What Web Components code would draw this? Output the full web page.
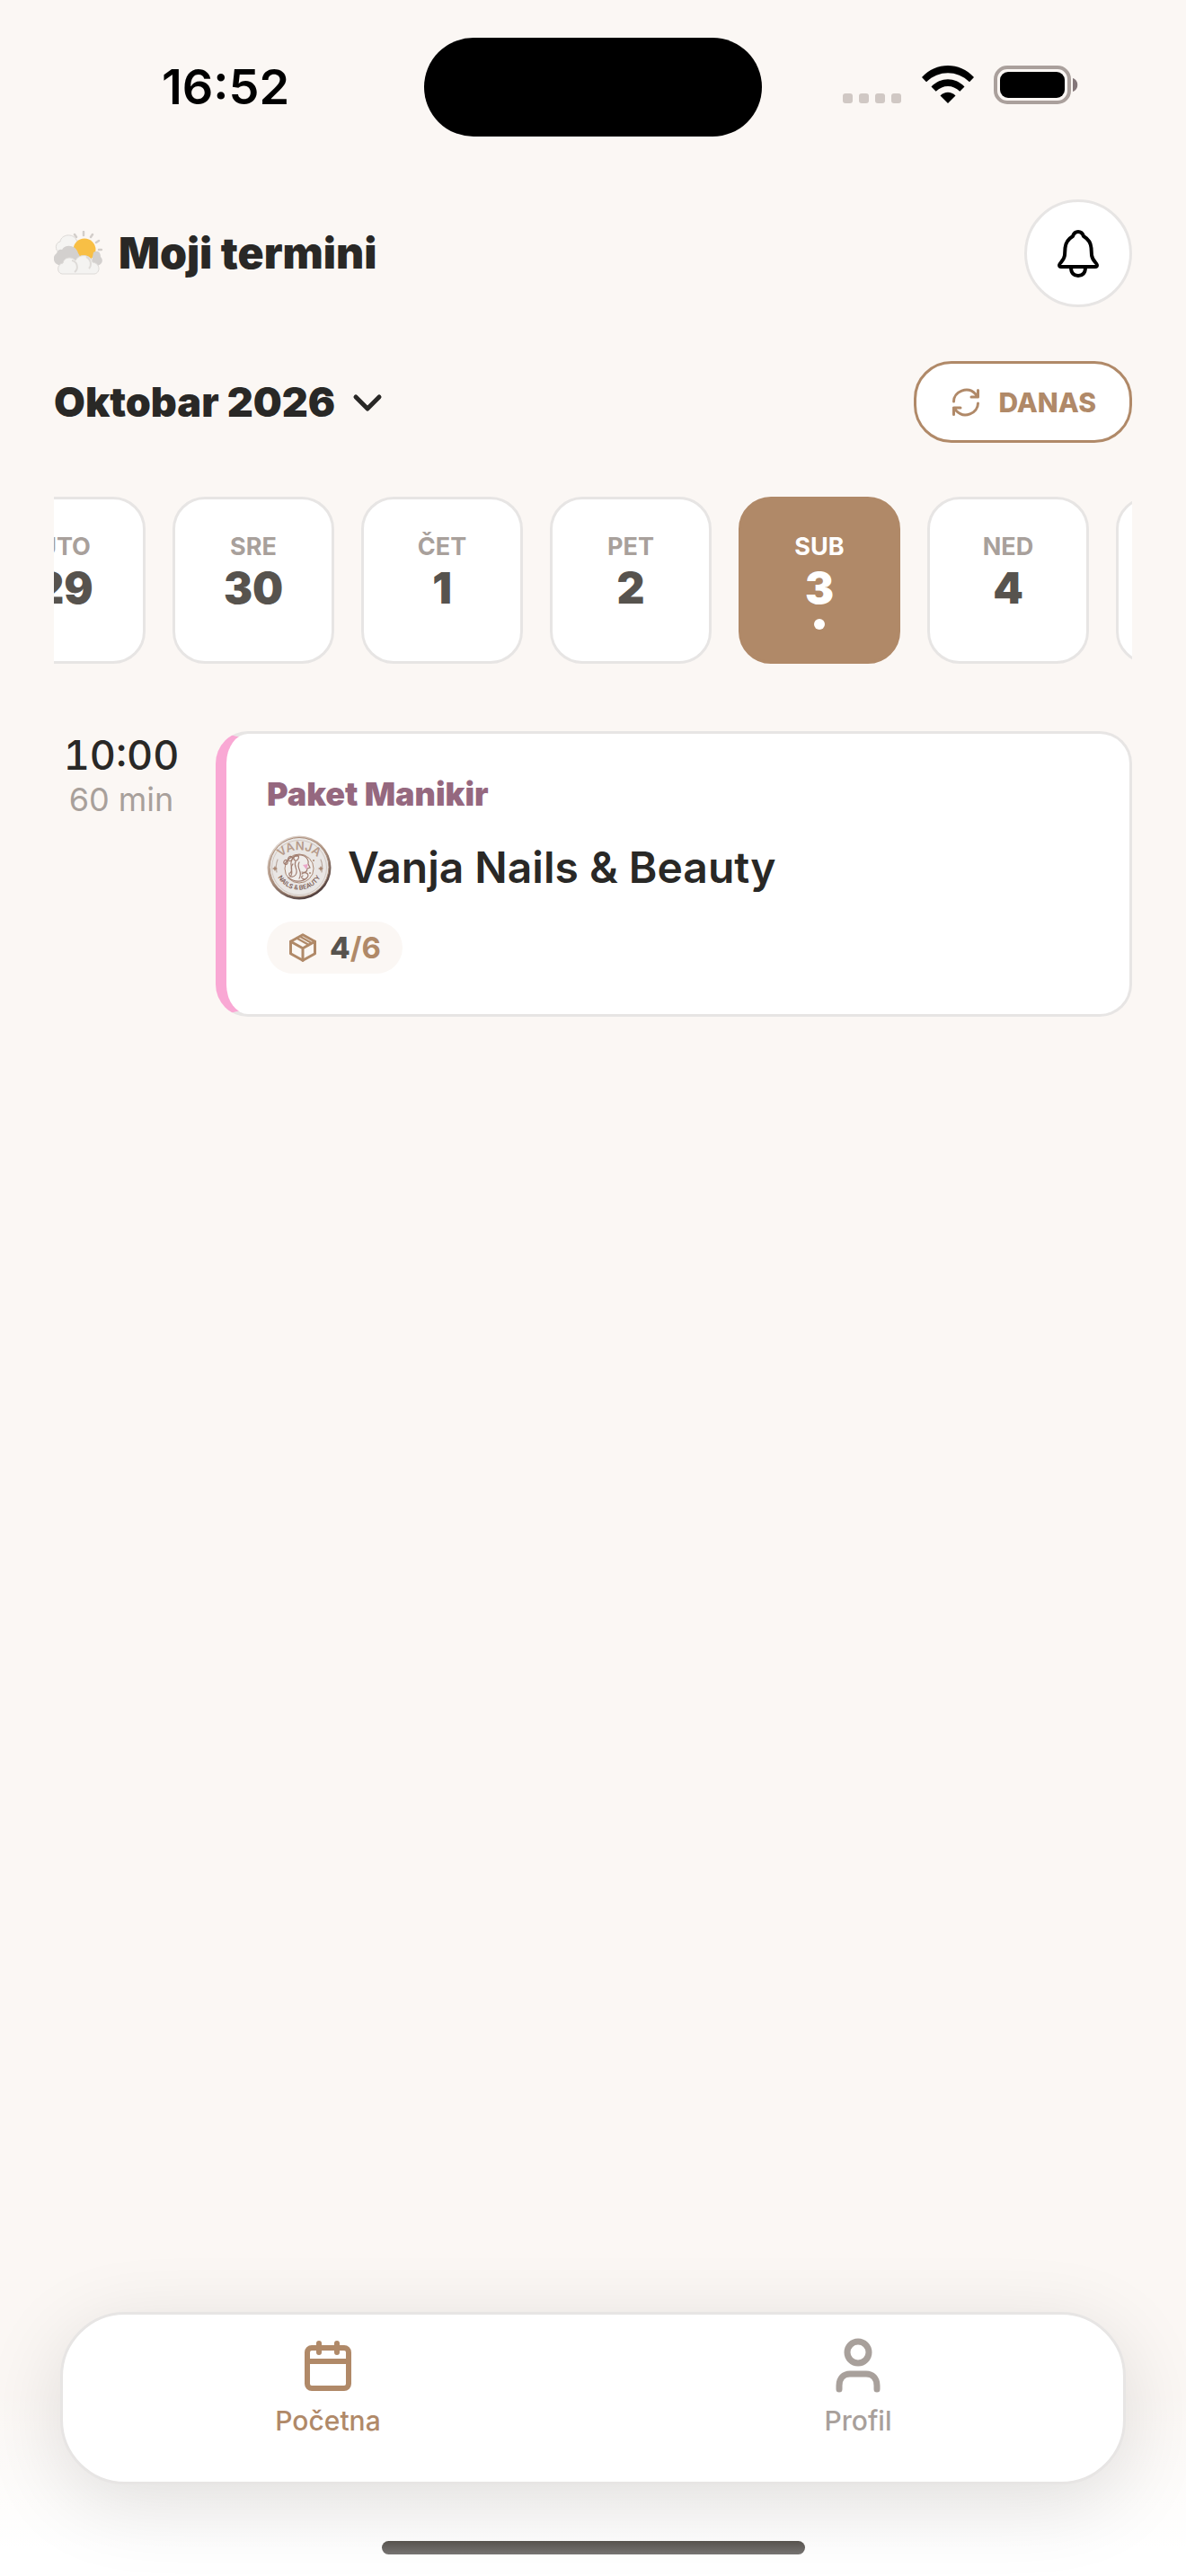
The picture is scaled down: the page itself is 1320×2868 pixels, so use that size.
<!DOCTYPE html>
<html lang="sr-Latn">
<head>
<meta charset="utf-8">
<meta name="viewport" content="width=device-width, initial-scale=1">
<title>Moji termini</title>
<style>
    :root {
        --bg: #fbf7f4;
        --surface: #fff;
        --line: #e7e5e4;
        --ink: #292826;
        --ink-soft: #57534e;
        --muted: #a8a09b;
        --accent: #b08968;
        --plum: #95687f;
        --pink: #f9a8d4;
        --gutter: 60px;
    }

    body {
        margin: 0;
        background: var(--bg);
        color: var(--ink);
        font-family: Inter, "Liberation Sans", sans-serif;
    }
</style>
</head>
<body>
<termini-app></termini-app>

<script>
class StatusBar extends HTMLElement {
    constructor() {
        super();
        this.attachShadow({mode: "open"});
    }

    static get styles() {
        return /* css */`
            :host {
                display: grid;
                grid-template-columns: 1fr 376px 1fr;
                align-items: center;
                justify-items: center;
                padding: 42px 30px 0;
                color: #000;
            }

            time {
                font-size: 54px;
                line-height: 60px;
                font-weight: 600;
            }

            .island {
                width: 100%;
                height: 110px;
                border-radius: 55px;
                background: #000;
            }

            .icons {
                display: flex;
            }

            .signal { margin-right: 23px; }
            .wifi { margin-right: 22px; }
        `;
    }

    connectedCallback() {
        this.shadowRoot.innerHTML = /* html */`
        <style>${StatusBar.styles}</style>
        <time>${this.getAttribute("time")}</time>
        <div class="island"></div>
        <div class="icons">
            <svg class="signal" width="65" height="48" viewBox="0 0 65 48" fill="#d0c8c4">
                <rect x="0" y="31" width="11" height="11" rx="3"/>
                <rect x="18" y="31" width="11" height="11" rx="3"/>
                <rect x="36" y="31" width="11" height="11" rx="3"/>
                <rect x="54" y="31" width="11" height="11" rx="3"/>
            </svg>
            <svg class="wifi" width="58" height="48" viewBox="0 0 58 48">
                <path d="M0 13C16-4.300 42-4.300 58 13l-5 5.300C39 5 19 5 5 18.300z"/>
                <path d="M10.500 23.500c10.500-11 26.500-11 37 0l-5.200 5.300c-8-7.600-18.600-7.600-26.600 0z"/>
                <path d="M20.500 33.500c5-5 12-5 17 0L29 42z"/>
            </svg>
            <svg width="94" height="48" viewBox="0 0 94 48">
                <rect x="2" y="2" width="82" height="39" rx="13" fill="none" stroke="#aaa09c" stroke-width="4"/>
                <rect x="7" y="7" width="72" height="29" rx="9"/>
                <path d="M88 14c7 2 7 13 0 15z" fill="#837679"/>
            </svg>
        </div>
        `;
    }
}

class AppHeader extends HTMLElement {
    constructor() {
        super();
        this.attachShadow({mode: "open"});
    }

    static get styles() {
        return /* css */`
            :host {
                display: flex;
                align-items: center;
                gap: 18px;
                padding: 0 var(--gutter);
            }

            h1 {
                flex: 1;
                margin: 0;
                font-size: 48px;
                line-height: 58px;
                font-weight: 900;
            }

            button {
                display: grid;
                place-items: center;
                box-sizing: border-box;
                width: 120px;
                height: 120px;
                padding: 0;
                border: 3px solid var(--line);
                border-radius: 50%;
                background: var(--surface);
            }
        `;
    }

    connectedCallback() {
        this.shadowRoot.innerHTML = /* html */`
        <style>${AppHeader.styles}</style>
        <svg width="54" height="50" viewBox="0 0 54 50">
            <g stroke="#d3ceca" stroke-width="2.500" stroke-linecap="round">
                <path d="M23 4l2 3M33 1v4M43 4l-2 3M50 11l-3 2M50 21h3"/>
            </g>
            <path d="M6 24C1 22 1 13 7 12c1-8 14-10 18-2 4 5 1 13-4 14z" fill="#f5f4f2" stroke="#dcd9d6"/>
            <circle cx="34" cy="21" r="12.500" fill="#f8bf45"/>
            <path d="M44 24c5-3 8 0 8 5 4 4 1 10-5 10h-6z" fill="#d3d0ce"/>
            <path d="M8 38C0 39-3 29 3 25c1-4 4-5 6-4 4-7 16-5 18 4 4 4 2 12-4 13z" fill="#d3d0ce"/>
            <path d="M9 48c-6-1-6-11 1-12 1-7 10-8 14-3 4-8 17-7 19 2 9 1 9 12 2 13z" fill="#f4f3f1" stroke="#dedbd8"/>
            <path d="M20 33c6 1 8 9 3 13M36 29c6 3 6 10 3 13" fill="none" stroke="#dedbd8" stroke-width="2"/>
        </svg>
        <h1><slot></slot></h1>
        <button aria-label="Obaveštenja">
            <svg width="60" height="60" viewBox="0 0 60 60" fill="none" stroke="#000" stroke-width="4" stroke-linecap="round" stroke-linejoin="round">
                <path d="M30 6c-3 0-5 2-6 5-5 3-8 7-8.500 13L15 32c-.5 6-6 9-6 11 0 1.500 1 2 2 2h38c1 0 2-.5 2-2 0-2-5.500-5-6-11l-.5-8c-.5-6-3.500-10-8.500-13-1-3-3-5-6-5z"/>
                <path d="M22 46c0 6 3.500 9 8 9s8-3 8-9"/>
            </svg>
        </button>
        `;
    }
}

class MonthBar extends HTMLElement {
    constructor() {
        super();
        this.attachShadow({mode: "open"});
    }

    static get styles() {
        return /* css */`
            :host {
                display: flex;
                align-items: center;
                justify-content: space-between;
                padding: 0 var(--gutter);
            }

            button {
                display: flex;
                align-items: center;
                font: inherit;
            }

            .month {
                gap: 18px;
                padding: 0;
                border: 0;
                background: none;
                color: var(--ink);
                font-size: 45px;
                line-height: 54px;
                font-weight: 900;
            }

            .today {
                gap: 18px;
                height: 91px;
                padding: 0 37px;
                border: 3px solid var(--accent);
                border-radius: 42px;
                background: var(--surface);
                color: var(--accent);
                font-size: 30px;
                font-weight: 800;
            }
        `;
    }

    connectedCallback() {
        this.shadowRoot.innerHTML = /* html */`
        <style>${MonthBar.styles}</style>
        <button class="month">
            <slot></slot>
            <svg width="36" height="36" viewBox="0 0 36 36" fill="none" stroke="currentColor" stroke-width="5" stroke-linecap="round" stroke-linejoin="round">
                <path d="M5 12l13 13 13-13"/>
            </svg>
        </button>
        <button class="today">
            <svg width="36" height="36" viewBox="0 0 36 36" fill="none" stroke="currentColor" stroke-width="3" stroke-linecap="round" stroke-linejoin="round">
                <path d="M4.500 17C4.500 6 20-1 29 9l2.500 3M31.500 4.500V12H24"/>
                <path d="M31.500 19c0 11-15.500 18-24.500 8l-2.500-3M4.500 31.500V24H12"/>
            </svg>
            DANAS
        </button>
        `;
    }
}

class DayCell extends HTMLElement {
    constructor() {
        super();
        this.attachShadow({mode: "open"});
    }

    static get styles() {
        return /* css */`
            :host {
                display: block;
                flex: none;
            }

            button {
                display: flex;
                flex-direction: column;
                align-items: center;
                box-sizing: border-box;
                width: 180px;
                height: 186px;
                padding: 34px 0 0;
                border: 3px solid var(--line);
                border-radius: 36px;
                background: var(--surface);
                color: var(--ink-soft);
                font: inherit;
            }

            .name {
                color: var(--muted);
                font-size: 27px;
                line-height: 38px;
                font-weight: 700;
            }

            .number {
                font-size: 48px;
                line-height: 54px;
                font-weight: 900;
            }

            :host([selected]) button {
                border-color: var(--accent);
                background: var(--accent);
                color: #fff;

                & .name {
                    color: #fff;
                }

                &::after {
                    content: "";
                    width: 12px;
                    height: 12px;
                    margin-top: 7px;
                    border-radius: 50%;
                    background: #fff;
                }
            }
        `;
    }

    connectedCallback() {
        this.shadowRoot.innerHTML = /* html */`
        <style>${DayCell.styles}</style>
        <button>
            <span class="name">${this.getAttribute("name") ?? ""}</span>
            <span class="number">${this.getAttribute("number") ?? ""}</span>
        </button>
        `;
    }
}

class DayStrip extends HTMLElement {
    constructor() {
        super();
        this.attachShadow({mode: "open"});
    }

    static get styles() {
        return /* css */`
            :host {
                display: flex;
                gap: 30px;
                margin: 0 var(--gutter);
                overflow-x: auto;
                scrollbar-width: none;
            }
        `;
    }

    connectedCallback() {
        this.shadowRoot.innerHTML = /* html */`
        <style>${DayStrip.styles}</style>
        <slot></slot>
        `;
    }
}

class SalonLogo extends HTMLElement {
    constructor() {
        super();
        this.attachShadow({mode: "open"});
    }

    static get styles() {
        return /* css */`
            :host {
                display: block;
                width: 72px;
                height: 72px;
            }

            svg {
                display: block;
            }

            text {
                font-family: Inter, sans-serif;
                font-weight: 600;
            }
        `;
    }

    connectedCallback() {
        this.shadowRoot.innerHTML = /* html */`
        <style>${SalonLogo.styles}</style>
        <svg width="72" height="72" viewBox="0 0 72 72">
            <defs>
                <linearGradient id="rim" x1="0" y1="0" x2=".6" y2="1">
                    <stop offset="0" stop-color="#f1eeec"/>
                    <stop offset=".5" stop-color="#b59a88"/>
                    <stop offset="1" stop-color="#51403f"/>
                </linearGradient>
                <path id="top" d="M12 29a29 29 0 0 1 48 0"/>
                <path id="bottom" d="M10 41a27 27 0 0 0 52 0"/>
            </defs>
            <circle cx="36" cy="36" r="35.500" fill="url(#rim)"/>
            <circle cx="36" cy="35.500" r="33" fill="#e9e6e4" stroke="#a88a76"/>
            <circle cx="36" cy="36" r="30.500" fill="none" stroke="#cbbfb8" stroke-width=".8"/>
            <circle cx="36" cy="37" r="16" fill="#f0edeb" stroke="#a98772"/>
            <g fill="none" stroke="#a07d70" stroke-width="1.200" stroke-linecap="round">
                <path d="M38 22c7 1 9 7 8 10l2 4-3 1c0 4-3 5-6 4M38 22c-6-1-10 3-11 8s3 8-1 12"/>
                <path d="M20 32c3-6 8-9 15-9M19 29c2-3 5-1 4 2s-5 1-4-2zM24 25c2-3 6-1 4 2s-6 1-4-2zM30 24c2-4 7-2 5 2s-6 2-5-2z"/>
                <path d="M32 29c-3 6 4 9 0 15-3 4-8 2-7-2M36 30c-4 7 5 10 0 18M29 32c-5 5 2 9-3 14M39 43c4-3 9 0 6 4s-9 0-5-2M24 47c6 5 15 6 21 0"/>
                <path d="M12 27c-2 5-2 10-1 14M60 27c2 5 2 10 1 14" stroke="#bba99f"/>
            </g>
            <path d="M40 33l6-1-2 6z" fill="#eba7c9"/>
            <g fill="#a98772">
                <path d="M9 34l1 2 2 1-2 1-1 2-1-2-2-1 2-1zM60 34l1 2 2 1-2 1-1 2-1-2-2-1 2-1z"/>
                <circle cx="52" cy="28" r="1"/>
                <circle cx="48" cy="42" r="1"/>
            </g>
            <text font-size="13" fill="#b69b8b" text-anchor="middle"><textPath href="#top" startOffset="50%">VANJA</textPath></text>
            <text font-size="7" fill="#7c6057" text-anchor="middle"><textPath href="#bottom" startOffset="50%">NAILS &amp; BEAUTY</textPath></text>
        </svg>
        `;
    }
}

class AppointmentItem extends HTMLElement {
    constructor() {
        super();
        this.attachShadow({mode: "open"});
    }

    static get styles() {
        return /* css */`
            :host {
                display: flex;
                gap: 30px;
                padding: 0 var(--gutter);
            }

            .when {
                display: flex;
                flex-direction: column;
                width: 150px;
                text-align: center;
            }

            time {
                font-size: 45px;
                line-height: 54px;
                font-weight: 500;
                font-variant-numeric: tabular-nums;
            }

            .duration {
                color: var(--muted);
                font-size: 36px;
                line-height: 44px;
            }

            .card {
                flex: 1;
                display: flex;
                flex-direction: column;
                align-items: flex-start;
                gap: 24px;
                padding: 45px;
                border: 3px solid var(--line);
                border-left: 12px solid var(--pink);
                border-radius: 36px;
                background: var(--surface);
            }

            h2 {
                margin: 0;
                color: var(--plum);
                font-size: 36px;
                line-height: 44px;
                font-weight: 900;
            }

            .salon {
                display: flex;
                align-items: center;
                gap: 18px;
                font-size: 48px;
                line-height: 58px;
                font-weight: 600;
            }

            .visits {
                display: flex;
                align-items: center;
                gap: 12px;
                padding: 9px 24px 9px 22px;
                border-radius: 30px;
                background: var(--bg);
                color: var(--accent);
                font-size: 33px;
                line-height: 40px;
                font-weight: 700;

                & b {
                    color: var(--ink-soft);
                    font-weight: 800;
                }
            }
        `;
    }

    connectedCallback() {
        const [done, total] = this.getAttribute("visits").split("/");

        this.shadowRoot.innerHTML = /* html */`
        <style>${AppointmentItem.styles}</style>
        <div class="when">
            <time>${this.getAttribute("time")}</time>
            <span class="duration">${this.getAttribute("duration")}</span>
        </div>
        <article class="card">
            <h2>${this.getAttribute("service")}</h2>
            <div class="salon">
                <salon-logo></salon-logo>
                <span><slot></slot></span>
            </div>
            <div class="visits">
                <svg width="36" height="36" viewBox="0 0 24 24" fill="none" stroke="currentColor" stroke-width="2" stroke-linecap="round" stroke-linejoin="round">
                    <path d="M12 2.500l9 5v9l-9 5-9-5v-9z"/>
                    <path d="M3 7.500l9 5 9-5M12 12.500v9"/>
                    <path d="M7.500 5l9 5M10 3.800l8 4.500" stroke-width="1.500"/>
                </svg>
                <span><b>${done}</b>/${total}</span>
            </div>
        </article>
        `;
    }
}

class TabBar extends HTMLElement {
    constructor() {
        super();
        this.attachShadow({mode: "open"});
    }

    static get styles() {
        return /* css */`
            :host {
                display: flex;
                flex-direction: column;
                align-items: center;
                padding: 0 67px 24px;
                background: linear-gradient(transparent 30%, #fff 90%);
            }

            nav {
                display: grid;
                grid-template-columns: 1fr 1fr;
                box-sizing: border-box;
                width: 100%;
                height: 192px;
                padding-top: 24px;
                border: 3px solid var(--line);
                border-radius: 72px;
                background: var(--surface);
                box-shadow: 0 20px 90px rgb(0 0 0 / 12%);
            }

            a {
                display: flex;
                flex-direction: column;
                align-items: center;
                gap: 10px;
                color: var(--muted);
                font-size: 30px;
                line-height: 36px;
                font-weight: 500;
                text-decoration: none;
            }

            a[aria-current] {
                color: var(--accent);
            }

            .home-indicator {
                width: 471px;
                height: 15px;
                margin-top: 63px;
                border-radius: 8px;
                background: linear-gradient(#57534e, #767372);
            }
        `;
    }

    connectedCallback() {
        this.shadowRoot.innerHTML = /* html */`
        <style>${TabBar.styles}</style>
        <nav>
            <a href="#pocetna" aria-current="page">
                <svg width="66" height="66" viewBox="0 0 66 66" fill="none" stroke="currentColor" stroke-width="6" stroke-linecap="round">
                    <rect x="10" y="13" width="46" height="45" rx="5"/>
                    <path d="M10 28h46M23 8v10M43 8v10"/>
                </svg>
                Početna
            </a>
            <a href="#profil">
                <svg width="66" height="66" viewBox="0 0 66 66" fill="none" stroke="currentColor" stroke-width="7" stroke-linecap="round">
                    <circle cx="33" cy="18" r="12"/>
                    <path d="M12 59v-4c0-8 5-13 12-13h18c7 0 12 5 12 13v4"/>
                </svg>
                Profil
            </a>
        </nav>
        <div class="home-indicator"></div>
        `;
    }
}

class TerminiApp extends HTMLElement {
    constructor() {
        super();
        this.attachShadow({mode: "open"});
    }

    static get styles() {
        return /* css */`
            :host {
                display: flex;
                flex-direction: column;
                min-height: 100vh;
            }

            app-header {
                margin-top: 70px;
            }

            month-bar, day-strip {
                margin-top: 60px;
            }

            main {
                flex: 1;
                padding: 75px 0;
            }
        `;
    }

    connectedCallback() {
        this.shadowRoot.innerHTML = /* html */`
        <style>${TerminiApp.styles}</style>
        <status-bar time="16:52"></status-bar>
        <app-header>Moji termini</app-header>
        <month-bar>Oktobar 2026</month-bar>
        <day-strip>
            <day-cell name="UTO" number="29"></day-cell>
            <day-cell name="SRE" number="30"></day-cell>
            <day-cell name="ČET" number="1"></day-cell>
            <day-cell name="PET" number="2"></day-cell>
            <day-cell name="SUB" number="3" selected></day-cell>
            <day-cell name="NED" number="4"></day-cell>
            <!-- filled when the strip is scrolled on -->
            <day-cell></day-cell>
        </day-strip>
        <main>
            <appointment-item time="10:00" duration="60 min" service="Paket Manikir" visits="4/6">Vanja Nails &amp; Beauty</appointment-item>
        </main>
        <tab-bar></tab-bar>
        `;

        // keep the selected day in view, with the previous days partly scrolled out
        this.shadowRoot.querySelector("day-strip").scrollLeft = 78;
    }
}

customElements.define("status-bar", StatusBar);
customElements.define("app-header", AppHeader);
customElements.define("month-bar", MonthBar);
customElements.define("day-cell", DayCell);
customElements.define("day-strip", DayStrip);
customElements.define("salon-logo", SalonLogo);
customElements.define("appointment-item", AppointmentItem);
customElements.define("tab-bar", TabBar);
customElements.define("termini-app", TerminiApp);
</script>
</body>
</html>
